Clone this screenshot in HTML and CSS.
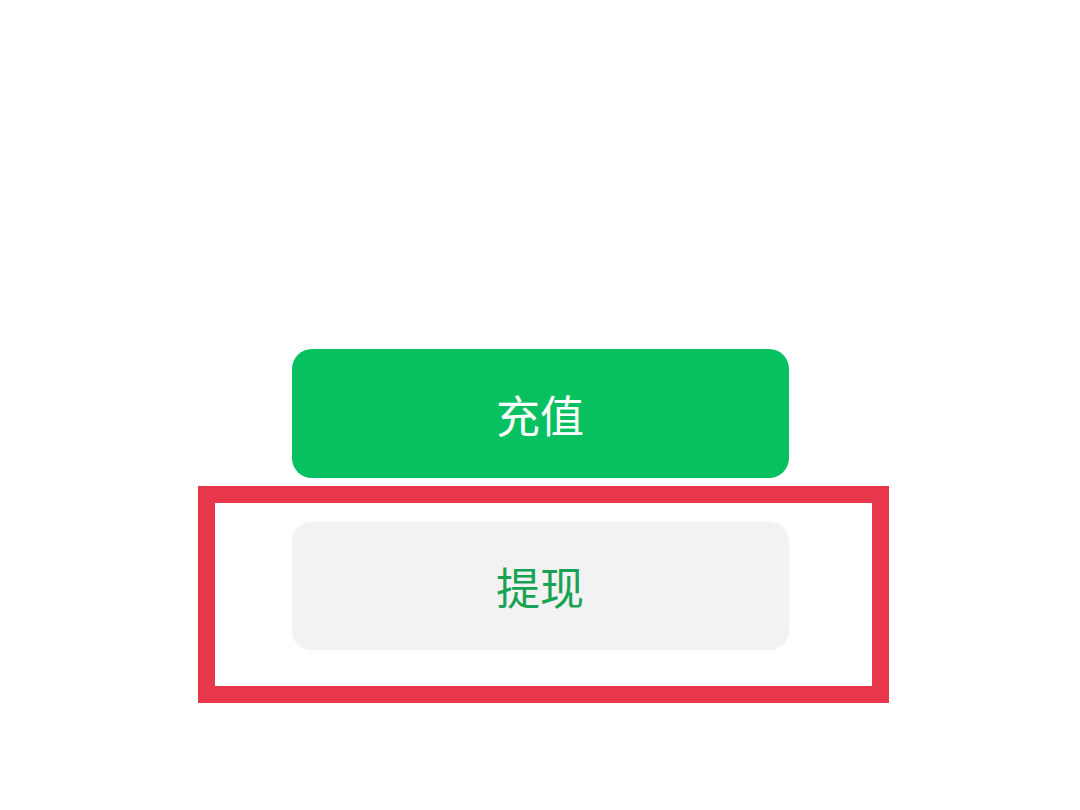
FILE: index.html
```html
<!DOCTYPE html>
<html lang="zh-CN">
<head>
  <meta charset="UTF-8">
  <meta name="viewport" content="width=device-width, initial-scale=1.0">
  <title>充值 / 提现</title>
  <link rel="stylesheet" href="styles.css">
</head>
<body>
  <main class="page">
    <button class="btn btn-primary">充值</button>

    <div class="highlight">
      <button class="btn btn-plain">提现</button>
    </div>
  </main>
</body>
</html>
```

FILE: styles.css
```css
body {
  margin: 0;
  background-color: #fff;
  font-family: "Noto Sans CJK SC", "Noto Sans", sans-serif;
}

.page {
  display: flex;
  flex-direction: column;
  align-items: center;
  padding-top: 349px;
}

.btn {
  display: flex;
  justify-content: center;
  align-items: center;
  width: 497px;
  height: 129px;
  border: none;
  border-radius: 20px;
  font-family: inherit;
  font-size: 44px;
  line-height: 1;
  padding: 0;
}

.btn-primary {
  background-color: #07c160;
  color: #fff;
}

.btn-plain {
  height: 128px;
  background-color: #f2f2f2;
  color: #17a353;
  box-shadow: 0 0 4px rgba(0, 0, 0, 0.03);
}

.highlight {
  margin-top: 8px;
  margin-left: 6px;
  border: 17px solid #e8364a;
  padding: 19px 83px 36px 77px;
}
```
